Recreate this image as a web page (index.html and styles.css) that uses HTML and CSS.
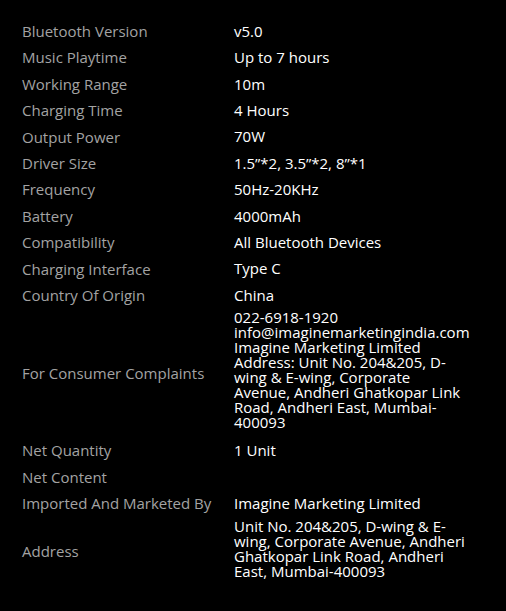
FILE: index.html
```html
<!DOCTYPE html>
<html lang="en">
<head>
    <meta charset="UTF-8" />
    <meta name="viewport" content="width=device-width, initial-scale=1.0" />
    <title>Specifications</title>
    <link rel="stylesheet" href="styles.css">
</head>
<body>
    <!-- Product specification table -->
    <table class="specs">
        <tr><td class="label">Bluetooth Version</td><td class="value">v5.0</td></tr>
        <tr><td class="label">Music Playtime</td><td class="value">Up to 7 hours</td></tr>
        <tr><td class="label">Working Range</td><td class="value">10m</td></tr>
        <tr><td class="label">Charging Time</td><td class="value">4 Hours</td></tr>
        <tr><td class="label">Output Power</td><td class="value">70W</td></tr>
        <tr><td class="label">Driver Size</td><td class="value">1.5”*2, 3.5”*2, 8”*1</td></tr>
        <tr><td class="label">Frequency</td><td class="value">50Hz-20KHz</td></tr>
        <tr><td class="label">Battery</td><td class="value">4000mAh</td></tr>
        <tr><td class="label">Compatibility</td><td class="value">All Bluetooth Devices</td></tr>
        <tr><td class="label">Charging Interface</td><td class="value">Type C</td></tr>
        <tr><td class="label">Country Of Origin</td><td class="value">China</td></tr>
        <tr>
            <td class="label">For Consumer Complaints</td>
            <td class="value multi">022-6918-1920<br>info@imaginemarketingindia.com<br>Imagine Marketing Limited<br>Address: Unit No. 204&amp;205, D-<br>wing &amp; E-wing, Corporate<br>Avenue, Andheri Ghatkopar Link<br>Road, Andheri East, Mumbai-<br>400093</td>
        </tr>
        <tr><td class="label">Net Quantity</td><td class="value">1 Unit</td></tr>
        <tr><td class="label">Net Content</td><td class="value"></td></tr>
        <tr><td class="label">Imported And Marketed By</td><td class="value">Imagine Marketing Limited</td></tr>
        <tr><td class="label">Address</td><td class="value multi">Unit No. 204&amp;205, D-wing &amp; E-<br>wing, Corporate Avenue, Andheri<br>Ghatkopar Link Road, Andheri<br>East, Mumbai-400093</td></tr>
    </table>
</body>
</html>
```

FILE: styles.css
```css
/* Page */
body {
    margin: 0;
    background-color: #000;
    font-family: "Open Sans", Arial, sans-serif;
    font-size: 15px;
}

/* Spec table */
.specs {
    border-collapse: collapse;
    margin: 18px 0 0 22px;
    width: 462px;
}

.specs td {
    padding: 2px 0;
    vertical-align: middle;
}

.label {
    width: 212px;
    line-height: 22.4px;
    color: #a3a3a3;
}

.value {
    line-height: 15px;
    color: #fff;
    white-space: nowrap;
}

/* Long values with several lines */
.value.multi {
    padding-bottom: 7px;
}
```
